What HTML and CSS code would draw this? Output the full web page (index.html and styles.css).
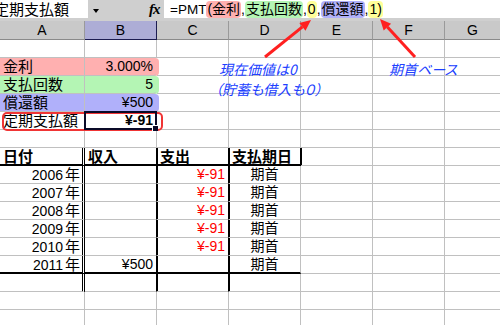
FILE: index.html
```html
<!DOCTYPE html>
<html lang="ja">
<head>
<meta charset="utf-8">
<title>PMT</title>
<link rel="stylesheet" href="styles.css">
</head>
<body>
<div class="app">
  <div class="fbar">
    <div class="namebox">定期支払額</div>
    <div class="dd"></div>
    <div class="fx">fx</div>
    <div class="formula"><span class="lat">=PMT</span><span class="hl pink">(金利</span>,<span class="hl green">支払回数</span>,<span class="hl yellow">0</span>,<span class="hl lav">償還額</span>,<span class="hl yellow">1)</span></div>
  </div>
  <div class="sheet">
    <div class="h">A</div><div class="h sel">B</div><div class="h">C</div><div class="h">D</div><div class="h">E</div><div class="h">F</div><div class="h">G</div>

    <div></div><div></div><div></div><div></div><div></div><div></div><div></div>

    <div class="j band pink">金利</div><div class="r band pink bend">3.000%</div><div></div><div></div><div></div><div></div><div></div>
    <div class="j band green">支払回数</div><div class="r band green bend">5</div><div></div><div></div><div></div><div></div><div></div>
    <div class="j band lav">償還額</div><div class="r band lav bend">¥500</div><div></div><div></div><div></div><div></div><div></div>
    <div class="j">定期支払額</div><div class="r b">¥-91</div><div></div><div></div><div></div><div></div><div></div>

    <div></div><div></div><div></div><div></div><div></div><div></div><div></div>

    <div class="j b tA hb">日付</div><div class="j b tB hb">収入</div><div class="j b tC hb">支出</div><div class="j b tD hb dr">支払期日</div><div class="el"></div><div></div><div></div>

    <div class="r tA">2006<span class="nen">年</span></div><div class="tB"></div><div class="r red tC">¥-91</div><div class="c j tD">期首</div><div></div><div></div><div></div>
    <div class="r tA">2007<span class="nen">年</span></div><div class="tB"></div><div class="r red tC">¥-91</div><div class="c j tD">期首</div><div></div><div></div><div></div>
    <div class="r tA">2008<span class="nen">年</span></div><div class="tB"></div><div class="r red tC">¥-91</div><div class="c j tD">期首</div><div></div><div></div><div></div>
    <div class="r tA">2009<span class="nen">年</span></div><div class="tB"></div><div class="r red tC">¥-91</div><div class="c j tD">期首</div><div></div><div></div><div></div>
    <div class="r tA">2010<span class="nen">年</span></div><div class="tB"></div><div class="r red tC">¥-91</div><div class="c j tD">期首</div><div></div><div></div><div></div>
    <div class="r tA hb">2011<span class="nen">年</span></div><div class="r tB hb">¥500</div><div class="tC hb"></div><div class="c j tD hb">期首</div><div></div><div></div><div></div>

    <div class="tA"></div><div class="tB"></div><div class="tC"></div><div class="tD"></div><div></div><div></div><div></div>

    <div></div><div></div><div></div><div></div><div></div><div></div><div></div>
    <div></div><div></div><div></div><div></div><div></div><div></div><div></div>
  </div>

  <div class="redbox"></div>
  <div class="selbox"><div class="handle"></div></div>

  <div class="note n1">現在価値は0</div>
  <div class="note n2">（貯蓄も借入も０）</div>
  <div class="note n3">期首ベース</div>

  <svg class="arrows" width="500" height="325" viewBox="0 0 500 325">
    <line x1="265" y1="57" x2="302.4" y2="26.9" stroke="#ff2020" stroke-width="3"/>
    <polygon points="311,20 305.5,30.8 299.3,23" fill="#ff2020"/>
    <line x1="415" y1="57" x2="387.4" y2="27.1" stroke="#ff2020" stroke-width="3"/>
    <polygon points="380,19 391.1,23.7 383.7,30.5" fill="#ff2020"/>
  </svg>
</div>
</body>
</html>
```

FILE: styles.css
```css
html, body {
  margin: 0;
  padding: 0;
  background: #fff;
}
.app {
  position: relative;
  width: 500px;
  height: 325px;
  overflow: hidden;
  font-family: "Liberation Sans", "Noto Sans CJK JP", sans-serif;
  color: #000;
}
.fbar {
  display: flex;
  align-items: flex-start;
  height: 21px;
  background: #cfcfcf;
}
.namebox {
  width: 88px;
  height: 18px;
  background: #fff;
  font-family: "Noto Sans CJK JP", sans-serif;
  font-size: 15px;
  line-height: 18px;
  text-indent: -6px;
  white-space: nowrap;
  overflow: hidden;
}
.dd {
  width: 0;
  height: 0;
  margin: 9px 0 0 5px;
  border-top: 4px solid #000;
  border-left: 3px solid transparent;
  border-right: 3px solid transparent;
}
.fx {
  margin-left: 50px;
  width: 15px;
  font-family: "Liberation Serif", serif;
  font-style: italic;
  font-weight: bold;
  font-size: 15px;
  line-height: 18px;
  letter-spacing: -1px;
}
.formula {
  flex: 1;
  height: 18px;
  background: #fff;
  padding-left: 6px;
  font-family: "Liberation Sans", "Noto Sans CJK JP", sans-serif;
  font-size: 14px;
  line-height: 18px;
  white-space: nowrap;
}
.formula .lat {
  font-size: 13.5px;
}
.hl {
  display: inline-block;
  height: 17px;
  line-height: 17px;
  border-radius: 4px;
  padding: 0 1px;
  vertical-align: top;
  margin-top: 1px;
}
.pink { background: #ffb0b0; }
.green { background: #b4f5b4; }
.lav { background: #b0b0fa; }
.yellow { background: #ffff99; }

.sheet {
  display: grid;
  grid-template-columns: 85px 72px 72px 72px 72px 72px 56px;
  grid-template-rows: 19px repeat(16, 18px);
}
.sheet > div {
  box-sizing: border-box;
  border-right: 1px solid #c0c0c0;
  border-bottom: 1px solid #c0c0c0;
  font-size: 14px;
  line-height: 17px;
  padding: 0 3px;
  white-space: nowrap;
}
.sheet > .h {
  background: #c9c9c9;
  border-right-color: #9a9a9a;
  border-bottom-color: #8a8a8a;
  text-align: center;
  font-size: 14px;
  line-height: 18px;
}
.sheet > .h.sel {
  background: #adadd6;
  border-right-color: #1c1c50;
  border-bottom-color: #1c1c50;
}
.sheet > .j {
  font-size: 15px;
}
.sheet > .r {
  text-align: right;
}
.sheet > .c {
  text-align: center;
  font-size: 14px;
}
.sheet > .b {
  font-weight: bold;
}
.sheet > .red {
  color: #ff0000;
}
.nen {
  font-size: 15px;
  margin-left: 2px;
}
.sheet > .band.bend {
  border-right-color: transparent;
  border-radius: 0 4px 4px 0;
}
.sheet > .band.pink.bend { box-shadow: 2px 0 0 #ffb0b0; }
.sheet > .band.green.bend { box-shadow: 2px 0 0 #b4f5b4; }
.sheet > .band.lav.bend { box-shadow: 2px 0 0 #b0b0fa; }

.sheet > .tA {
  border-right: 3px double #000;
  padding-right: 2px;
}
.sheet > .tB {
  border-right-color: #000;
}
.sheet > .tC {
  border-right-color: #000;
  box-shadow: inset 1px 0 0 #000;
}
.sheet > .tD {
  box-shadow: inset 1px 0 0 #000;
}
.sheet > .hb {
  border-bottom: 2px solid #000;
}
.sheet > .dr {
  border-right-color: #000;
}
.sheet > .el {
  box-shadow: inset 1px 0 0 #000;
}

.redbox {
  position: absolute;
  left: 2px;
  top: 112px;
  width: 161px;
  height: 19px;
  box-sizing: border-box;
  border: 2px solid #f03535;
  border-radius: 5px;
}
.selbox {
  position: absolute;
  left: 84px;
  top: 111px;
  width: 73px;
  height: 19px;
  box-sizing: border-box;
  border: 2px solid #0a0a28;
}
.handle {
  position: absolute;
  right: -3px;
  bottom: -3px;
  width: 5px;
  height: 5px;
  background: #0a0a28;
  border-top: 1px solid #fff;
  border-left: 1px solid #fff;
}
.note {
  position: absolute;
  font-family: "Noto Sans CJK JP", sans-serif;
  font-size: 14px;
  line-height: 16px;
  font-style: italic;
  color: #2040ff;
  font-feature-settings: "palt";
  white-space: nowrap;
}
.n1 { left: 219px; top: 61px; }
.n2 { left: 215px; top: 81px; }
.n3 { left: 389px; top: 61px; }
.arrows {
  position: absolute;
  left: 0;
  top: 0;
}
```
